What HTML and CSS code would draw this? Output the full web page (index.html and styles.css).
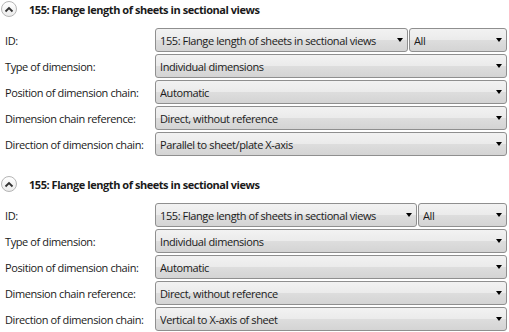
FILE: index.html
```html
<!DOCTYPE html>
<html>
<head>
<meta charset="utf-8">
<link rel="stylesheet" href="styles.css">
</head>
<body>
<div class="page">
  <section class="group">
    <div class="header">
      <span class="toggle"><svg width="10" height="7" viewBox="0 0 10 7"><path d="M1.5 5.5 L5 2 L8.5 5.5" fill="none" stroke="#333" stroke-width="1.8"/></svg></span>
      <span class="title">155: Flange length of sheets in sectional views</span>
    </div>
    <div class="grid">
      <div class="label">ID:</div>
      <div class="pair">
        <div class="combo main"><span class="val">155: Flange length of sheets in sectional views</span><span class="arrow"></span></div>
        <div class="combo small"><span class="val">All</span><span class="arrow"></span></div>
      </div>
      <div class="label">Type of dimension:</div>
      <div class="combo"><span class="val">Individual dimensions</span><span class="arrow"></span></div>
      <div class="label">Position of dimension chain:</div>
      <div class="combo"><span class="val">Automatic</span><span class="arrow"></span></div>
      <div class="label">Dimension chain reference:</div>
      <div class="combo"><span class="val">Direct, without reference</span><span class="arrow"></span></div>
      <div class="label">Direction of dimension chain:</div>
      <div class="combo"><span class="val">Parallel to sheet/plate X-axis</span><span class="arrow"></span></div>
    </div>
  </section>
  <section class="group second">
    <div class="header">
      <span class="toggle"><svg width="10" height="7" viewBox="0 0 10 7"><path d="M1.5 5.5 L5 2 L8.5 5.5" fill="none" stroke="#333" stroke-width="1.8"/></svg></span>
      <span class="title">155: Flange length of sheets in sectional views</span>
    </div>
    <div class="grid">
      <div class="label">ID:</div>
      <div class="pair">
        <div class="combo main wide"><span class="val">155: Flange length of sheets in sectional views</span><span class="arrow"></span></div>
        <div class="combo small"><span class="val">All</span><span class="arrow"></span></div>
      </div>
      <div class="label">Type of dimension:</div>
      <div class="combo"><span class="val">Individual dimensions</span><span class="arrow"></span></div>
      <div class="label">Position of dimension chain:</div>
      <div class="combo"><span class="val">Automatic</span><span class="arrow"></span></div>
      <div class="label">Dimension chain reference:</div>
      <div class="combo"><span class="val">Direct, without reference</span><span class="arrow"></span></div>
      <div class="label">Direction of dimension chain:</div>
      <div class="combo"><span class="val">Vertical to X-axis of sheet</span><span class="arrow"></span></div>
    </div>
  </section>
</div>
</body>
</html>
```

FILE: styles.css
```css
html, body {
  margin: 0;
  padding: 0;
  background: #ffffff;
}
body {
  font-family: "Open Sans", "Noto Sans", sans-serif;
  font-size: 11px;
  letter-spacing: -0.4px;
  color: #1a1a1a;
  width: 509px;
  height: 332px;
  overflow: hidden;
}
.page {
  display: flex;
  flex-direction: column;
  gap: 19px;
}
.group {
  display: flex;
  flex-direction: column;
  gap: 10px;
}
.header {
  height: 18px;
  display: flex;
  align-items: center;
  padding-left: 1px;
}
.toggle {
  width: 14px;
  height: 14px;
  border: 1px solid #b5b5b5;
  border-radius: 50%;
  background: linear-gradient(#ffffff, #ececec);
  display: flex;
  align-items: center;
  justify-content: center;
}
.title {
  margin-left: 12px;
  font-weight: 700;
  font-size: 11px;
  letter-spacing: -0.45px;
  white-space: nowrap;
}
.grid {
  display: grid;
  grid-template-columns: 155px 352px;
  grid-auto-rows: 24px;
  row-gap: 2px;
}
.label {
  padding-left: 5px;
  display: flex;
  align-items: center;
  white-space: nowrap;
}
.pair {
  display: flex;
  gap: 1px;
}
.combo {
  box-sizing: border-box;
  height: 24px;
  border: 1px solid #8f8f8f;
  border-radius: 3px;
  background: linear-gradient(#f2f2f2 0%, #ebebeb 48%, #dddddd 52%, #d4d4d4 100%);
  display: flex;
  align-items: center;
  padding-left: 4px;
}
.combo.main {
  width: 253px;
}
.combo.main.wide {
  width: 262px;
}
.combo.small {
  flex: 1;
}
.val {
  flex: 1;
  white-space: nowrap;
  overflow: hidden;
}
.arrow {
  width: 0;
  height: 0;
  border-left: 3.5px solid transparent;
  border-right: 3.5px solid transparent;
  border-top: 4px solid #000;
  margin-right: 4px;
  margin-left: 4px;
}
```
